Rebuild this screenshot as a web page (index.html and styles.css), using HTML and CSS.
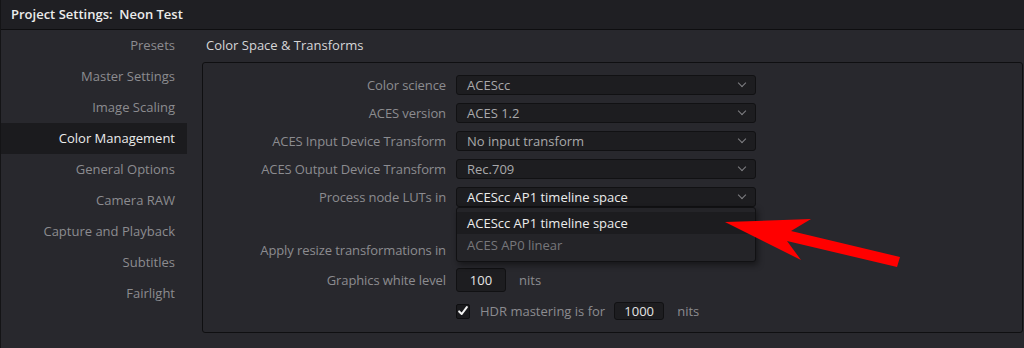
FILE: index.html
```html
<!DOCTYPE html>
<html lang="en">
<head>
    <meta charset="UTF-8">
    <title>Project Settings: Neon Test</title>
    <link rel="stylesheet" href="styles.css">
</head>
<body>

    <div class="window">
        <div class="titlebar">Project Settings:&nbsp; Neon Test</div>

        <div class="main">
            <ul class="sidebar">
                <li>Presets</li>
                <li>Master Settings</li>
                <li>Image Scaling</li>
                <li class="active">Color Management</li>
                <li>General Options</li>
                <li>Camera RAW</li>
                <li>Capture and Playback</li>
                <li>Subtitles</li>
                <li>Fairlight</li>
            </ul>

            <div class="content">
                <h2>Color Space &amp; Transforms</h2>

                <div class="panel">
                    <div class="row">
                        <label>Color science</label>
                        <div class="select"><span>ACEScc</span><i class="chev"></i></div>
                    </div>
                    <div class="row">
                        <label>ACES version</label>
                        <div class="select"><span>ACES 1.2</span><i class="chev"></i></div>
                    </div>
                    <div class="row">
                        <label>ACES Input Device Transform</label>
                        <div class="select"><span>No input transform</span><i class="chev"></i></div>
                    </div>
                    <div class="row">
                        <label>ACES Output Device Transform</label>
                        <div class="select"><span>Rec.709</span><i class="chev"></i></div>
                    </div>
                    <div class="row">
                        <label>Process node LUTs in</label>
                        <div class="select open">
                            <span>ACEScc AP1 timeline space</span><i class="chev"></i>
                            <ul class="menu">
                                <li class="current">ACEScc AP1 timeline space</li>
                                <li>ACES AP0 linear</li>
                            </ul>
                        </div>
                    </div>
                    <div class="row spaced">
                        <label>Apply resize transformations in</label>
                        <div class="select"><i class="chev"></i></div>
                    </div>
                    <div class="row tall">
                        <label>Graphics white level</label>
                        <div class="num">100</div>
                        <span class="unit">nits</span>
                    </div>
                    <div class="row check-row">
                        <label></label>
                        <div class="checkbox">
                            <svg width="14" height="14" viewBox="0 0 14 14"><path d="M2.5 7.5 L5.5 10.5 L11.5 2.5" fill="none" stroke="#f2f2f2" stroke-width="2.4" stroke-linecap="round" stroke-linejoin="round"/></svg>
                        </div>
                        <span class="check-label">HDR mastering is for</span>
                        <div class="num small">1000</div>
                        <span class="unit">nits</span>
                    </div>
                </div>
            </div>
        </div>

        <svg class="arrow" width="1024" height="348" viewBox="0 0 1024 348">
            <polygon points="724,222 810,219 790,231 899,257 896,267 786,241 800,260" fill="#ff0000"/>
        </svg>
    </div>

</body>
</html>
```

FILE: styles.css
```css
body {
    margin: 0;
    padding: 0;
    background-color: #28282d;
    font-family: "Open Sans", "Noto Sans", sans-serif;
    font-size: 13px;
    color: #8c8c90;
}

.window {
    position: relative;
    width: 1024px;
    height: 348px;
    overflow: hidden;
    border-left: 1px solid #141416;
    box-sizing: border-box;
}

.titlebar {
    height: 29px;
    line-height: 29px;
    padding-left: 10px;
    background-color: #1f1f23;
    border-bottom: 1px solid #0e0e10;
    color: #ececec;
    font-weight: 600;
    font-size: 13px;
}

.main {
    display: flex;
}

.sidebar {
    list-style: none;
    margin: 0;
    padding: 0;
    width: 201px;
    flex-shrink: 0;
}

.sidebar li {
    width: 186px;
    height: 31px;
    line-height: 30px;
    text-align: right;
    padding-right: 12px;
    box-sizing: border-box;
    color: #8c8c90;
}

.sidebar li.active {
    background-color: #1b1b1e;
    color: #ececec;
}

.content {
    flex: 1;
    margin-right: 1px;
}

.content h2 {
    margin: 0;
    height: 32px;
    line-height: 31px;
    padding-left: 4px;
    font-size: 13px;
    font-weight: normal;
    color: #d6d6d8;
}

.panel {
    height: 271px;
    box-sizing: border-box;
    border: 1px solid #0f0f11;
    border-radius: 3px;
    padding-top: 12px;
}

.row {
    display: flex;
    align-items: center;
    height: 20px;
    margin-bottom: 8px;
}

.row label {
    width: 243px;
    text-align: right;
    margin-right: 10px;
    flex-shrink: 0;
    letter-spacing: -0.1px;
}

.row.spaced {
    margin-top: 33px;
}

.row.tall {
    height: 24px;
    margin-bottom: 10px;
}

.row.check-row {
    height: 18px;
}

.select {
    position: relative;
    width: 300px;
    height: 20px;
    box-sizing: border-box;
    background-color: #1d1d20;
    border: 1px solid #111113;
    border-radius: 3px;
    padding-left: 10px;
    line-height: 18px;
    color: #a9a9ab;
}

.select.open {
    color: #ececec;
}

.chev {
    position: absolute;
    right: 10px;
    top: 4px;
    width: 5px;
    height: 5px;
    border-right: 1.5px solid #808084;
    border-bottom: 1.5px solid #808084;
    transform: rotate(45deg);
}

.menu {
    position: absolute;
    left: -1px;
    top: 19px;
    width: 300px;
    height: 55px;
    box-sizing: border-box;
    margin: 0;
    padding: 4px 0 0;
    list-style: none;
    background-color: #242428;
    border: 1px solid #111113;
    border-radius: 3px;
    box-shadow: 2px 3px 6px rgba(0, 0, 0, 0.45);
    z-index: 2;
}

.menu li {
    height: 22px;
    line-height: 22px;
    padding-left: 10px;
    color: #77777b;
}

.menu li.current {
    background-color: #1c1c1f;
    color: #ececec;
}

.num {
    width: 50px;
    height: 24px;
    box-sizing: border-box;
    background-color: #1d1d20;
    border: 1px solid #111113;
    border-radius: 3px;
    line-height: 22px;
    text-align: center;
    color: #e4e4e4;
    flex-shrink: 0;
}

.num.small {
    height: 18px;
    line-height: 16px;
}

.unit {
    margin-left: 13px;
    white-space: nowrap;
}

.checkbox {
    width: 14px;
    height: 15px;
    box-sizing: border-box;
    background-color: #1a1a1d;
    border: 1px solid #0e0e10;
    border-radius: 2px;
    display: flex;
    align-items: center;
    justify-content: center;
    flex-shrink: 0;
}

.check-label {
    margin-left: 10px;
    margin-right: 9px;
    white-space: nowrap;
}

.arrow {
    position: absolute;
    left: 0;
    top: 0;
    pointer-events: none;
    z-index: 5;
}
```
